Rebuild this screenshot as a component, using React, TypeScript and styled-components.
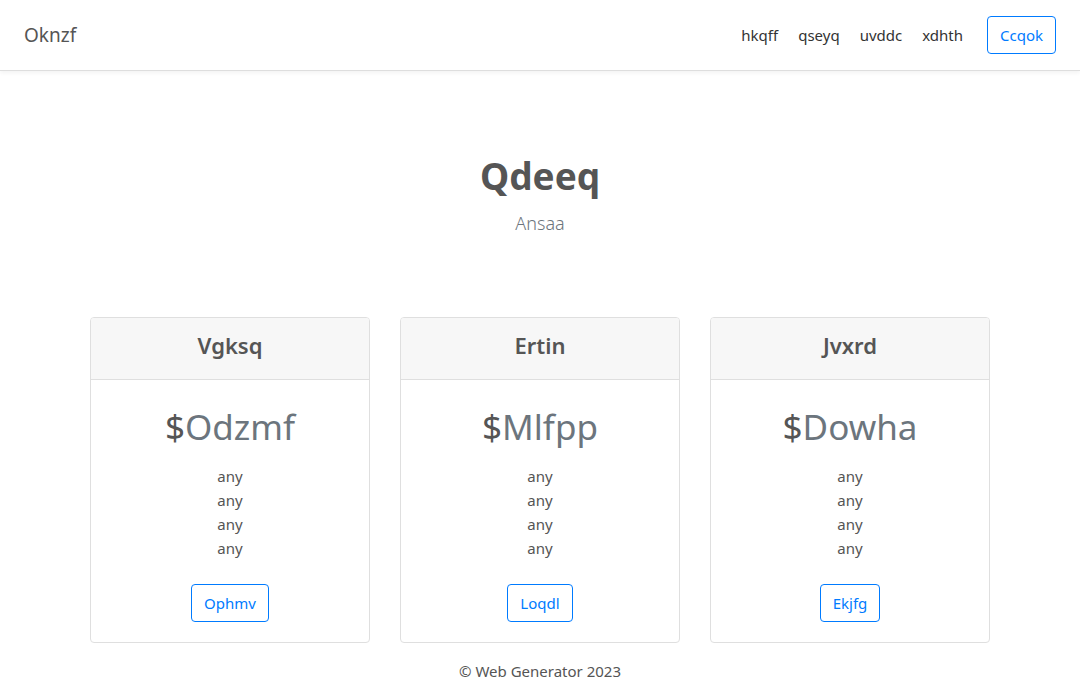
import React from "react";
import styled, { createGlobalStyle } from "styled-components";

const Global = createGlobalStyle`
  * { box-sizing: border-box; }
  body {
    margin: 0;
    font-family: "Segoe UI", "Noto Sans", "Open Sans", sans-serif;
    font-size: 16px;
    line-height: 1.5;
    color: #555;
    background: #fff;
  }
`;

const Navbar = styled.nav`
  height: 71px;
  display: flex;
  align-items: center;
  justify-content: space-between;
  padding: 0 24px;
  background: #fff;
  border-bottom: 1px solid #dedede;
  box-shadow: 0 2px 4px rgba(0, 0, 0, 0.05);
`;

const Brand = styled.a`
  font-size: 19px;
  color: #555;
  text-decoration: none;
`;

const NavLinks = styled.div`
  display: flex;
  align-items: center;
`;

const NavLink = styled.a`
  padding: 0 10px;
  color: #333;
  text-decoration: none;
  font-size: 15px;
`;

const OutlineButton = styled.button<{ $ml?: number }>`
  font-family: inherit;
  font-size: 15px;
  line-height: 24px;
  padding: 6px 12px;
  height: 38px;
  color: #007bff;
  background: transparent;
  border: 1px solid #007bff;
  border-radius: 4px;
  margin-left: ${(p) => p.$ml ?? 0}px;
  cursor: pointer;
`;

const Hero = styled.header`
  padding: 81px 16px 79px;
  text-align: center;
`;

const Title = styled.h1`
  margin: 0 0 8px;
  font-size: 37px;
  line-height: 48px;
  font-weight: 700;
  color: #555;
`;

const Lead = styled.p`
  margin: 0;
  font-size: 18px;
  line-height: 30px;
  font-weight: 300;
  color: #6c757d;
`;

const Deck = styled.div`
  width: 900px;
  margin: 0 auto;
  display: grid;
  grid-template-columns: repeat(3, 1fr);
  gap: 30px;
`;

const Card = styled.div`
  border: 1px solid #dfdfdf;
  border-radius: 4px;
  text-align: center;
  overflow: hidden;
`;

const CardHeader = styled.div`
  background: #f7f7f7;
  border-bottom: 1px solid #dfdfdf;
  padding: 9px 20px 15px;
`;

const CardTitle = styled.h4`
  margin: 0;
  font-size: 22px;
  line-height: 37px;
  font-weight: 600;
  color: #555;
`;

const CardBody = styled.div`
  padding: 20px;
`;

const Price = styled.h2`
  margin: 0;
  padding-top: 3px;
  font-size: 35px;
  line-height: 48px;
  font-weight: 400;
  color: #555;
`;

const Muted = styled.span`
  color: #6c757d;
`;

const Features = styled.ul`
  list-style: none;
  padding: 0;
  margin: 13px 0 24px;
  font-size: 15px;
  line-height: 24px;
  color: #555;
`;

const Footer = styled.footer`
  text-align: center;
  padding-top: 16px;
  font-size: 15px;
  line-height: 24px;
  color: #555;
`;

const plans = [
  { name: "Vgksq", price: "Odzmf", cta: "Ophmv" },
  { name: "Ertin", price: "Mlfpp", cta: "Loqdl" },
  { name: "Jvxrd", price: "Dowha", cta: "Ekjfg" },
];

export default function App() {
  return (
    <>
      <Global />
      <Navbar>
        <Brand href="#">Oknzf</Brand>
        <NavLinks>
          <NavLink href="#">hkqff</NavLink>
          <NavLink href="#">qseyq</NavLink>
          <NavLink href="#">uvddc</NavLink>
          <NavLink href="#">xdhth</NavLink>
          <OutlineButton $ml={14}>Ccqok</OutlineButton>
        </NavLinks>
      </Navbar>
      <Hero>
        <Title>Qdeeq</Title>
        <Lead>Ansaa</Lead>
      </Hero>
      <Deck>
        {plans.map((p) => (
          <Card key={p.name}>
            <CardHeader>
              <CardTitle>{p.name}</CardTitle>
            </CardHeader>
            <CardBody>
              <Price>
                $<Muted>{p.price}</Muted>
              </Price>
              <Features>
                <li>any</li>
                <li>any</li>
                <li>any</li>
                <li>any</li>
              </Features>
              <OutlineButton>{p.cta}</OutlineButton>
            </CardBody>
          </Card>
        ))}
      </Deck>
      <Footer>© Web Generator 2023</Footer>
    </>
  );
}
